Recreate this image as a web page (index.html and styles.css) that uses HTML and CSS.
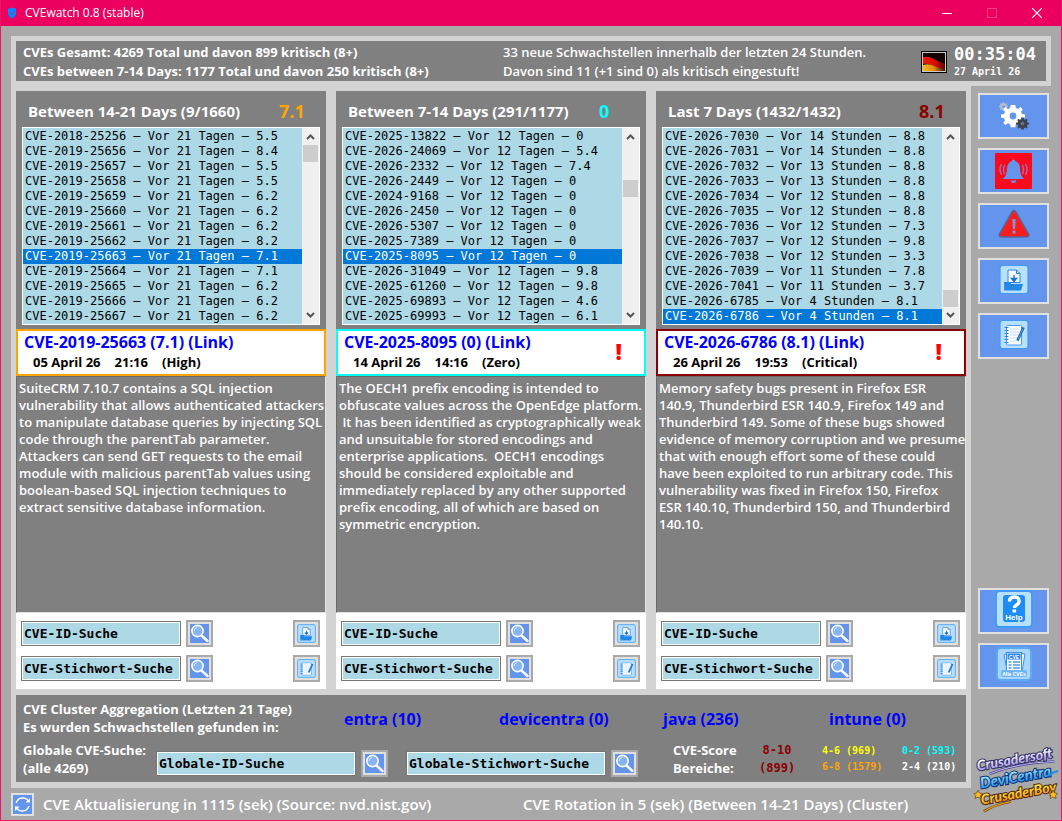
FILE: index.html
```html
<!DOCTYPE html>
<html lang="de">
<head>
    <meta charset="UTF-8">
    <meta name="viewport" content="width=device-width, initial-scale=1.0">
    <title>CVEwatch 0.8 (stable)</title>
    <link rel="stylesheet" href="styles.css">
</head>
<body>
    <!-- shared icons -->
    <svg class="sprite" width="0" height="0" aria-hidden="true">
        <symbol id="search" viewBox="0 0 19 19">
            <path d="M11.5 11.5L17.5 17" stroke="#fff" stroke-width="2.4" stroke-linecap="round"/>
            <circle cx="7.5" cy="7" r="5.6" fill="#86b4f4" stroke="#fff" stroke-width="1.6"/>
            <path d="M4 7a4 4 0 0 1 3-3.5" fill="none" stroke="#d8e8ff" stroke-width="1"/>
        </symbol>
        <symbol id="save" viewBox="0 0 30 30">
            <rect x="1" y="1" width="28" height="28" rx="2.5" fill="#b9dfff" stroke="#3f9bf5" stroke-width="1.2"/>
            <path d="M9 18V5.500h8.500L21 9v9z" fill="#f4faff" stroke="#2a86e0" stroke-width="1"/>
            <path d="M17.500 5.500V9H21" fill="none" stroke="#2a86e0" stroke-width="1"/>
            <path d="M15 10.500v5M12.500 14l2.500 3 2.500-3z" fill="#1c6fd0" stroke="#1c6fd0" stroke-width="1.300"/>
            <path d="M6 17.500h5l1 2h12l-2 6.500H7z" fill="#2387e8"/>
            <path d="M6 17.500V26" stroke="#1c6fd0" stroke-width="1.500"/>
        </symbol>
        <symbol id="note" viewBox="0 0 30 30">
            <rect x="1" y="1" width="28" height="28" rx="2.500" fill="#b9dfff" stroke="#3f9bf5" stroke-width="1.200"/>
            <rect x="7.500" y="6" width="15" height="19.500" rx="1" fill="#fff" stroke="#3f9bf5" stroke-width="1"/>
            <path d="M11 9.500h9M11 12.500h9M11 15.500h9M11 18.500h9M11 21.500h9" stroke="#c5dbef" stroke-width="1"/>
            <path d="M5.500 8h4M5.500 11h4M5.500 14h4M5.500 17h4M5.500 20h4M5.500 23h4" stroke="#2a86e0" stroke-width="1.200"/>
            <path d="M24.500 8L18.500 21" stroke="#1761b0" stroke-width="2.600"/>
            <path d="M24 9L19 20" stroke="#4aa4f7" stroke-width="1"/>
        </symbol>
        <symbol id="gear" viewBox="-12 -12 24 24">
            <path d="M-2.300-11h4.600l.6 3 2.200.9L7.600-8.900 9.700-6.600 8-4.200l1 2.200 3 .6v3l-3 .6-1 2.200 1.700 2.600-2.100 2.100L5.100 7.300l-2.200.9-.6 3h-4.600l-.6-3-2.200-.9-2.500 1.800-2.100-2.100L-8 4.400l-1-2.200-3-.6v-3l3-.6 1-2.200-1.700-2.400 2.100-2.300 2.500 1.800 2.200-.9z"/>
            <circle r="3.400" class="hole"/>
        </symbol>
    </svg>

    <div class="window">
        <div class="titlebar">
            <svg class="shield" width="10" height="12" viewBox="0 0 10 12">
                <path d="M1 1.500Q3.500 1.500 5 .5Q6.500 1.500 9 1.500V6Q9 9.500 5 11.500Q1 9.500 1 6z" fill="#0a84ff"/>
                <path d="M3 5.500L4.500 7L7.500 4" fill="none" stroke="#d11a6a" stroke-width="1"/>
            </svg>
            <span class="caption">CVEwatch 0.8 (stable)</span>
            <button class="winbtn" aria-label="Minimieren"><svg width="10" height="10"><path d="M0 5.500h10" stroke="#fff"/></svg></button>
            <button class="winbtn" aria-label="Maximieren" disabled><svg width="10" height="10"><rect x=".5" y=".5" width="9" height="9" fill="none" stroke="#f2407f"/></svg></button>
            <button class="winbtn" aria-label="Schließen"><svg width="10" height="10"><path d="M0 0L10 10M10 0L0 10" stroke="#fff" stroke-width="1.200"/></svg></button>
        </div>

        <div class="app">
            <header class="summary">
                <div class="stats">
                    CVEs Gesamt: 4269 Total und davon 899 kritisch (8+)<br>
                    CVEs between 7-14 Days: 1177 Total und davon 250 kritisch (8+)
                </div>
                <div class="news">
                    33 neue Schwachstellen innerhalb der letzten 24 Stunden.<br>
                    Davon sind 11 (+1 sind 0) als kritisch eingestuft!
                </div>
                <svg class="flag" width="26" height="22" viewBox="0 0 26 22">
                    <defs>
                        <linearGradient id="red" x1="0" x2="1"><stop offset="0" stop-color="#f01808"/><stop offset=".6" stop-color="#d00c04"/><stop offset="1" stop-color="#5a0604"/></linearGradient>
                        <linearGradient id="yellow" x1="0" x2="1"><stop offset="0" stop-color="#f5b818"/><stop offset=".5" stop-color="#e08a14"/><stop offset="1" stop-color="#3a1404"/></linearGradient>
                    </defs>
                    <rect width="26" height="22" fill="#000"/>
                    <rect x="1.500" y="1.500" width="23" height="19" fill="#120404" stroke="#c9c9c9"/>
                    <path d="M2 6Q8 5 13 8T24 13V18Q17 18 12 15T2 13z" fill="url(#red)"/>
                    <path d="M2 14Q8 12 13 15T24 18V20H2z" fill="url(#yellow)"/>
                </svg>
                <div class="clock">
                    <time class="time">00:35:04</time>
                    <div class="date">27 April 26</div>
                </div>
            </header>

            <main class="board">
                <div class="columns">
                    <section class="column high">
                        <div class="head"><h2>Between 14-21 Days (9/1660)</h2><span class="score">7.1</span></div>
                        <div class="list">
                            <select size="13" aria-label="Between 14-21 Days">
                                <option>CVE-2018-25256 – Vor 21 Tagen – 5.5</option>
                                <option>CVE-2019-25656 – Vor 21 Tagen – 8.4</option>
                                <option>CVE-2019-25657 – Vor 21 Tagen – 5.5</option>
                                <option>CVE-2019-25658 – Vor 21 Tagen – 5.5</option>
                                <option>CVE-2019-25659 – Vor 21 Tagen – 6.2</option>
                                <option>CVE-2019-25660 – Vor 21 Tagen – 6.2</option>
                                <option>CVE-2019-25661 – Vor 21 Tagen – 6.2</option>
                                <option>CVE-2019-25662 – Vor 21 Tagen – 8.2</option>
                                <option selected>CVE-2019-25663 – Vor 21 Tagen – 7.1</option>
                                <option>CVE-2019-25664 – Vor 21 Tagen – 7.1</option>
                                <option>CVE-2019-25665 – Vor 21 Tagen – 6.2</option>
                                <option>CVE-2019-25666 – Vor 21 Tagen – 6.2</option>
                                <option>CVE-2019-25667 – Vor 21 Tagen – 6.2</option>
                            </select>
                            <div class="scroll top">
                                <svg width="9" height="6"><path d="M1 5L4.500 1.500L8 5" /></svg>
                                <i class="before"></i><i class="thumb"></i><i class="after"></i>
                                <svg width="9" height="6"><path d="M1 1L4.500 4.500L8 1" /></svg>
                            </div>
                        </div>
                        <div class="info">
                            <a href="#">CVE-2019-25663 (7.1) (Link)</a>
                            <div class="meta"><span>05 April 26</span><span>21:16</span><span>(High)</span></div>
                        </div>
                        <div class="text">SuiteCRM 7.10.7 contains a SQL injection
vulnerability that allows authenticated attackers
to manipulate database queries by injecting SQL
code through the parentTab parameter.
Attackers can send GET requests to the email
module with malicious parentTab values using
boolean-based SQL injection techniques to
extract sensitive database information.</div>
                        <div class="tools">
                            <input type="text" value="CVE-ID-Suche" aria-label="CVE-ID-Suche">
                            <button class="small" aria-label="Suchen"><svg><use href="#search"/></svg></button>
                            <button class="small right" aria-label="Speichern"><svg><use href="#save"/></svg></button>
                            <input type="text" value="CVE-Stichwort-Suche" aria-label="CVE-Stichwort-Suche">
                            <button class="small" aria-label="Suchen"><svg><use href="#search"/></svg></button>
                            <button class="small right" aria-label="Notiz"><svg><use href="#note"/></svg></button>
                        </div>
                    </section>

                    <section class="column zero">
                        <div class="head"><h2>Between 7-14 Days (291/1177)</h2><span class="score">0</span></div>
                        <div class="list">
                            <select size="13" aria-label="Between 7-14 Days">
                                <option>CVE-2025-13822 – Vor 12 Tagen – 0</option>
                                <option>CVE-2026-24069 – Vor 12 Tagen – 5.4</option>
                                <option>CVE-2026-2332 – Vor 12 Tagen – 7.4</option>
                                <option>CVE-2026-2449 – Vor 12 Tagen – 0</option>
                                <option>CVE-2024-9168 – Vor 12 Tagen – 0</option>
                                <option>CVE-2026-2450 – Vor 12 Tagen – 0</option>
                                <option>CVE-2026-5307 – Vor 12 Tagen – 0</option>
                                <option>CVE-2025-7389 – Vor 12 Tagen – 0</option>
                                <option selected>CVE-2025-8095 – Vor 12 Tagen – 0</option>
                                <option>CVE-2026-31049 – Vor 12 Tagen – 9.8</option>
                                <option>CVE-2025-61260 – Vor 12 Tagen – 9.8</option>
                                <option>CVE-2025-69893 – Vor 12 Tagen – 4.6</option>
                                <option>CVE-2025-69993 – Vor 12 Tagen – 6.1</option>
                            </select>
                            <div class="scroll middle">
                                <svg width="9" height="6"><path d="M1 5L4.500 1.500L8 5" /></svg>
                                <i class="before"></i><i class="thumb"></i><i class="after"></i>
                                <svg width="9" height="6"><path d="M1 1L4.500 4.500L8 1" /></svg>
                            </div>
                        </div>
                        <div class="info">
                            <a href="#">CVE-2025-8095 (0) (Link)</a>
                            <div class="meta"><span>14 April 26</span><span>14:16</span><span>(Zero)</span></div>
                            <b class="alert">!</b>
                        </div>
                        <div class="text">The OECH1 prefix encoding is intended to
obfuscate values across the OpenEdge platform.
 It has been identified as cryptographically weak
and unsuitable for stored encodings and
enterprise applications.  OECH1 encodings
should be considered exploitable and
immediately replaced by any other supported
prefix encoding, all of which are based on
symmetric encryption.</div>
                        <div class="tools">
                            <input type="text" value="CVE-ID-Suche" aria-label="CVE-ID-Suche">
                            <button class="small" aria-label="Suchen"><svg><use href="#search"/></svg></button>
                            <button class="small right" aria-label="Speichern"><svg><use href="#save"/></svg></button>
                            <input type="text" value="CVE-Stichwort-Suche" aria-label="CVE-Stichwort-Suche">
                            <button class="small" aria-label="Suchen"><svg><use href="#search"/></svg></button>
                            <button class="small right" aria-label="Notiz"><svg><use href="#note"/></svg></button>
                        </div>
                    </section>

                    <section class="column critical">
                        <div class="head"><h2>Last 7 Days (1432/1432)</h2><span class="score">8.1</span></div>
                        <div class="list">
                            <select size="13" aria-label="Last 7 Days">
                                <option>CVE-2026-7030 – Vor 14 Stunden – 8.8</option>
                                <option>CVE-2026-7031 – Vor 14 Stunden – 8.8</option>
                                <option>CVE-2026-7032 – Vor 13 Stunden – 8.8</option>
                                <option>CVE-2026-7033 – Vor 13 Stunden – 8.8</option>
                                <option>CVE-2026-7034 – Vor 12 Stunden – 8.8</option>
                                <option>CVE-2026-7035 – Vor 12 Stunden – 8.8</option>
                                <option>CVE-2026-7036 – Vor 12 Stunden – 7.3</option>
                                <option>CVE-2026-7037 – Vor 12 Stunden – 9.8</option>
                                <option>CVE-2026-7038 – Vor 12 Stunden – 3.3</option>
                                <option>CVE-2026-7039 – Vor 11 Stunden – 7.8</option>
                                <option>CVE-2026-7041 – Vor 11 Stunden – 3.7</option>
                                <option>CVE-2026-6785 – Vor 4 Stunden – 8.1</option>
                                <option selected>CVE-2026-6786 – Vor 4 Stunden – 8.1</option>
                            </select>
                            <div class="scroll bottom">
                                <svg width="9" height="6"><path d="M1 5L4.500 1.500L8 5" /></svg>
                                <i class="before"></i><i class="thumb"></i><i class="after"></i>
                                <svg width="9" height="6"><path d="M1 1L4.500 4.500L8 1" /></svg>
                            </div>
                        </div>
                        <div class="info">
                            <a href="#">CVE-2026-6786 (8.1) (Link)</a>
                            <div class="meta"><span>26 April 26</span><span>19:53</span><span>(Critical)</span></div>
                            <b class="alert">!</b>
                        </div>
                        <div class="text">Memory safety bugs present in Firefox ESR
140.9, Thunderbird ESR 140.9, Firefox 149 and
Thunderbird 149. Some of these bugs showed
evidence of memory corruption and we presume
that with enough effort some of these could
have been exploited to run arbitrary code. This
vulnerability was fixed in Firefox 150, Firefox
ESR 140.10, Thunderbird 150, and Thunderbird
140.10.</div>
                        <div class="tools">
                            <input type="text" value="CVE-ID-Suche" aria-label="CVE-ID-Suche">
                            <button class="small" aria-label="Suchen"><svg><use href="#search"/></svg></button>
                            <button class="small right" aria-label="Speichern"><svg><use href="#save"/></svg></button>
                            <input type="text" value="CVE-Stichwort-Suche" aria-label="CVE-Stichwort-Suche">
                            <button class="small" aria-label="Suchen"><svg><use href="#search"/></svg></button>
                            <button class="small right" aria-label="Notiz"><svg><use href="#note"/></svg></button>
                        </div>
                    </section>
                </div>

                <section class="cluster">
                    <div class="row">
                        <div class="intro">CVE Cluster Aggregation (Letzten 21 Tage)<br>Es wurden Schwachstellen gefunden in:</div>
                        <nav class="hits">
                            <a href="#">entra (10)</a>
                            <a href="#">devicentra (0)</a>
                            <a href="#">java (236)</a>
                            <a href="#">intune (0)</a>
                        </nav>
                    </div>
                    <div class="row">
                        <div class="global">Globale CVE-Suche:<br>(alle 4269)</div>
                        <div class="find">
                            <input type="text" value="Globale-ID-Suche" aria-label="Globale-ID-Suche">
                            <button class="small" aria-label="Suchen"><svg><use href="#search"/></svg></button>
                        </div>
                        <div class="find">
                            <input type="text" value="Globale-Stichwort-Suche" aria-label="Globale-Stichwort-Suche">
                            <button class="small" aria-label="Suchen"><svg><use href="#search"/></svg></button>
                        </div>
                        <div class="ranges">
                            <div class="label">CVE-Score<br>Bereiche:</div>
                            <div class="top-range">8-10<br>(899)</div>
                            <div class="range"><span class="yellow">4-6 (969)</span><br><span class="orange">6-8 (1579)</span></div>
                            <div class="range"><span class="cyan">0-2 (593)</span><br><span>2-4 (210)</span></div>
                        </div>
                    </div>
                </section>
            </main>

            <aside class="sidebar">
                <button class="big" aria-label="Einstellungen">
                    <svg width="30" height="28" viewBox="0 0 30 28">
                        <g fill="#b9c0cc" color="#6495ed"><use href="#gear" x="0" y="0" width="9" height="9"/></g>
                        <g fill="#fff" color="#6495ed"><use href="#gear" x="2" y="2" width="24" height="24"/></g>
                        <g fill="#3e444e" color="#6a7486"><use href="#gear" x="17" y="15" width="13" height="13"/></g>
                    </svg>
                </button>
                <button class="big" aria-label="Alarm">
                    <svg width="38" height="36" viewBox="0 0 38 36">
                        <rect width="37" height="36" rx="1" fill="#fb0a1e"/>
                        <path d="M18.500 6.500a1.800 1.800 0 0 1 1.800 1.800Q25 10 25 16Q25 22 29 26H8Q12 22 12 16Q12 10 16.700 8.300A1.800 1.800 0 0 1 18.500 6.500zM15.500 27.500h6q-.5 2.500-3 2.500t-3-2.500z" fill="#6495ed"/>
                        <path d="M9.500 12q-2 4.500 0 9M6.500 11q-3 5.500 0 11M27.500 12q2 4.500 0 9M30.500 11q3 5.500 0 11" fill="none" stroke="#a06fb4" stroke-width="1.400"/>
                    </svg>
                </button>
                <button class="big" aria-label="Warnungen">
                    <svg class="raised" width="32" height="30" viewBox="0 0 32 30">
                        <path d="M14 3Q16 0 18 3L30.500 25Q31.500 28 28.500 28H3.500Q.500 28 1.500 25z" fill="#f91d1d" stroke="#55679a" stroke-width="1.500"/>
                        <path d="M14.300 10h3.400l-.7 10h-2zM14.500 21.500h3v3h-3z" fill="#7e93d8"/>
                    </svg>
                </button>
                <button class="big" aria-label="Speichern"><svg class="raised" width="30" height="31"><use href="#save"/></svg></button>
                <button class="big" aria-label="Notizen"><svg class="raised" width="30" height="31"><use href="#note"/></svg></button>
                <button class="big help" aria-label="Hilfe">
                    <svg class="raised" width="38" height="38" viewBox="0 0 38 38">
                        <rect x="1" y="1" width="36" height="36" rx="4" fill="#b9e0ff" stroke="#3f9bfa" stroke-width="1.800"/>
                        <rect x="8" y="5" width="22" height="27" rx="3" fill="#1e8cf5"/>
                        <path d="M14.500 11.500q0-4.500 4.800-4.500t4.700 4.200q0 2.400-2.500 3.800q-2 1-2 3" fill="none" stroke="#fff" stroke-width="3.400"/>
                        <rect x="17.500" y="19.500" width="3.600" height="3" fill="#fff"/>
                        <text x="19" y="30" font-size="8" text-anchor="middle">Help</text>
                    </svg>
                </button>
                <button class="big" aria-label="Alle CVEs">
                    <svg class="raised" width="36" height="34" viewBox="0 0 36 34">
                        <rect x="1" y="1" width="34" height="32" rx="4" fill="#a9d6fd" stroke="#5aaafa" stroke-width="1.800"/>
                        <path d="M24 6l5 1-3 18h-3zM12 6l-4 2 3 15z" fill="#e8f5ff" stroke="#3d8fe6"/>
                        <rect x="10.500" y="5.500" width="15" height="18" fill="#fff" stroke="#3d8fe6"/>
                        <rect x="11.500" y="6.500" width="13" height="6" fill="#2b84e4"/>
                        <path d="M12.500 15h3M17 15h7M12.500 18h3M17 18h7M12.500 21h3M17 21h7" stroke="#4d9cf0" stroke-width="1.300"/>
                        <rect x="5" y="23" width="26" height="7" rx="2" fill="#6fb5fa"/>
                        <text x="18" y="11.500" font-size="5" text-anchor="middle">CVE</text>
                        <text x="18" y="28.500" font-size="5" text-anchor="middle">Alle CVEs</text>
                    </svg>
                </button>
                <svg class="logo" width="82" height="64" viewBox="0 0 82 64">
                    <defs>
                        <linearGradient id="violet" x1="0" y1="0" x2="0" y2="1"><stop offset=".3" stop-color="#fff"/><stop offset="1" stop-color="#8f7fe0"/></linearGradient>
                        <linearGradient id="blue" x1="0" y1="0" x2="0" y2="1"><stop offset=".3" stop-color="#8fe4ff"/><stop offset="1" stop-color="#0a78e0"/></linearGradient>
                        <linearGradient id="gold" x1="0" y1="0" x2="0" y2="1"><stop offset=".3" stop-color="#ffe23a"/><stop offset="1" stop-color="#f08a10"/></linearGradient>
                    </defs>
                    <g transform="rotate(-10 41 32)">
                        <path d="M14 21Q45 15 80 20" fill="none" stroke="#4a4290" stroke-width="2.500"/>
                        <path d="M14 21Q45 15 80 20" fill="none" stroke="#c8c0f4" stroke-width="1"/>
                        <text x="3" y="16" font-size="14" fill="url(#violet)" stroke="#2c2860">Crusadersoft</text>
                        <text x="3" y="34" font-size="15" fill="url(#blue)" stroke="#0a2c70">DeviCentra</text>
                        <path d="M72 33Q77 30 82 30" fill="none" stroke="#1a8be8" stroke-width="2"/>
                        <text x="1" y="50" font-size="14" fill="url(#gold)" stroke="#4a2208">CrusaderBoy</text>
                        <path d="M2 57Q14 52 30 52" fill="none" stroke="#5a2c08" stroke-width="2.500"/>
                        <path d="M2 57Q14 52 30 52" fill="none" stroke="#f0a010" stroke-width="1.200"/>
                    </g>
                    <path d="M1 42l1.500 3 3 .5-2 2 .5 3-3-1.500L-2 50.500l.8-3-2-2 3-.5zM76 42l1.500 3 3 .5-2 2 .5 3-3-1.500-3 1.500.8-3-2-2 3-.5z" fill="#ffc020" stroke="#5a2c08" stroke-width=".600"/>
                </svg>
            </aside>

            <footer class="status">
                <button class="refresh" aria-label="Aktualisieren">
                    <svg width="19" height="19" viewBox="0 0 19 19">
                        <path d="M3 8Q5 3 9.500 3T15.500 6.500M16 11Q14 16 9.500 16T3.500 12.500" fill="none" stroke="#fff" stroke-width="1.300"/>
                        <path d="M12.500 7.500h4.500V3zM6.500 11.500H2V16z" fill="#fff"/>
                    </svg>
                </button>
                <span class="update">CVE Aktualisierung in 1115 (sek) (Source: nvd.nist.gov)</span>
                <span>CVE Rotation in 5 (sek) (Between 14-21 Days) (Cluster)</span>
            </footer>
        </div>
    </div>
</body>
</html>
```
FILE: styles.css
```css
* {
    box-sizing: border-box;
}

body {
    margin: 0;
    font-family: "Open Sans", "Noto Sans", sans-serif;
    font-size: 13px;
    font-weight: 700;
    line-height: 18px;
    color: #fff;
    background-color: #a9a9a9;
}

button {
    display: flex;
    align-items: center;
    justify-content: center;
    padding: 0;
    border: none;
    cursor: pointer;
}

a {
    color: blue;
    text-decoration: none;
}

.sprite {
    position: absolute;
}

.hole {
    fill: currentColor;
}

.window {
    display: flex;
    flex-direction: column;
    min-height: 100vh;
    border: 1px solid #ee1466;
    border-top: none;
}

/* title bar */
.titlebar {
    display: flex;
    align-items: center;
    height: 26px;
    padding: 0 2px 0 6px;
    background-color: #ec005f;
    font-weight: 400;
    font-size: 12px;
}

.caption {
    flex: 1;
    margin-left: 8px;
}

.winbtn {
    width: 45px;
    height: 26px;
    background: none;
}

.app {
    flex: 1;
    display: grid;
    grid-template-columns: 1fr 80px;
    grid-template-rows: auto 1fr auto;
    padding: 10px 10px 0;
    background-color: #a9a9a9;
}

/* top summary */
.summary {
    grid-column: 1 / 3;
    display: flex;
    align-items: center;
    height: 50px;
    padding: 1px 7px 0;
    border: 5px solid lightgray;
    background-color: gray;
    line-height: 19px;
    white-space: nowrap;
}

.stats {
    width: 480px;
}

.news {
    flex: 1;
    font-weight: 600;
}

.clock {
    width: 85px;
    margin-left: 7px;
    font-family: "DejaVu Sans Mono", monospace;
}

.time {
    display: block;
    font-size: 17px;
    line-height: 20px;
}

.date {
    font-size: 10px;
    line-height: 16px;
}

/* boards */
.board {
    display: flex;
    flex-direction: column;
    gap: 6px;
    padding: 5px 5px 6px;
    background-color: lightgray;
}

.columns {
    flex: 1;
    display: grid;
    grid-template-columns: repeat(3, 1fr);
    gap: 10px;
}

.column {
    display: flex;
    flex-direction: column;
    min-width: 0;
    background-color: gray;
}

.high {
    --level: orange;
}

.zero {
    --level: cyan;
}

.critical {
    --level: darkred;
}

.head {
    display: flex;
    align-items: center;
    justify-content: space-between;
    height: 36px;
    padding: 4px 20px 0 12px;
}

h2 {
    margin: 0;
    font-size: 15px;
}

.score {
    width: 27px;
    font-size: 18px;
    color: var(--level);
}

.list {
    display: flex;
    height: 198px;
    margin: 0 6px 4px;
    border: 1px solid #fff;
    background-color: lightblue;
}

select {
    flex: 1;
    min-width: 0;
    height: 196px;
    padding: 1px 0 0;
    border: none;
    border-radius: 0;
    outline: none;
    overflow: hidden;
    background-color: lightblue;
    color: #000;
    font-family: "DejaVu Sans Mono", monospace;
    font-size: 12px;
    font-weight: 400;
}

option {
    height: 15px;
    min-height: 15px;
    padding: 0 2px;
    line-height: 15px;
    color: #000;
}

option:checked {
    background: #0078d7 linear-gradient(#0078d7, #0078d7);
    color: #fff;
}

.scroll {
    display: flex;
    flex-direction: column;
    align-items: center;
    width: 17px;
    padding: 6px 0;
    background-color: #f0f0f0;
}

.scroll path {
    fill: none;
    stroke: #555;
    stroke-width: 2;
}

.scroll .thumb {
    width: 15px;
    height: 17px;
    background-color: #cdcdcd;
}

.scroll .before {
    flex: 0 0 5px;
}

.scroll .after {
    flex: 1;
}

.middle .before {
    flex-basis: 40px;
}

.bottom .before {
    flex: 1;
}

.bottom .after {
    flex: 0 0 5px;
}

.info {
    position: relative;
    height: 47px;
    padding: 1px 6px;
    border: 2px solid var(--level);
    background-color: #fff;
    color: #000;
}

.info a {
    display: block;
    font-size: 16px;
    line-height: 20px;
}

.meta {
    display: flex;
    gap: 14px;
    padding-left: 9px;
    line-height: 20px;
}

.alert {
    position: absolute;
    top: 8px;
    right: 22px;
    font-size: 22px;
    line-height: 24px;
    color: red;
}

.text {
    flex: 1;
    min-height: 120px;
    padding: 3px 0 3px 2px;
    border: 1px solid #696969;
    border-right-color: #e3e3e3;
    border-bottom-color: #e3e3e3;
    font-weight: 600;
    line-height: 17px;
    white-space: pre;
}

.tools {
    display: grid;
    grid-template-columns: 160px 27px 1fr;
    gap: 8px 5px;
    align-items: center;
    padding: 7px 6px 7px 5px;
    background-color: #fff;
}

input {
    width: 100%;
    min-width: 0;
    height: 25px;
    padding: 0 2px;
    border: 1px solid #777;
    border-radius: 0;
    outline: 1px solid #fff;
    outline-offset: -2px;
    background-color: lightblue;
    color: #000;
    font-family: "DejaVu Sans Mono", monospace;
    font-size: 13px;
    font-weight: 700;
}

.small {
    width: 27px;
    height: 27px;
    border: 2px solid #a9a9a9;
    background-color: #e0e0e0;
}

.small svg {
    width: 19px;
    height: 19px;
    background-color: #6495ed;
}

.right {
    justify-self: end;
}

.right svg {
    background-color: #b9dfff;
}

/* cluster panel */
.cluster {
    padding: 5px 7px;
    background-color: gray;
}

.row {
    display: flex;
    align-items: center;
    white-space: nowrap;
}

.row + .row {
    margin-top: 5px;
}

.intro {
    width: 321px;
}

.hits {
    flex: 1;
    display: grid;
    grid-template-columns: 155fr 164fr 166fr 130fr;
    padding-top: 2px;
    font-size: 16px;
}

.global {
    width: 133px;
}

.find {
    display: flex;
    align-items: center;
    gap: 6px;
    width: 250px;
    padding-top: 8px;
}

.find input {
    width: 200px;
}

.find .small {
    margin-left: -1px;
}

.ranges {
    flex: 1;
    display: grid;
    grid-template-columns: 86px 63px 80px 1fr;
    padding-left: 17px;
}

.top-range {
    color: darkred;
    font-family: "DejaVu Sans Mono", monospace;
    font-size: 12px;
    text-align: center;
    justify-self: start;
}

.range {
    padding-top: 2px;
    font-family: "DejaVu Sans Mono", monospace;
    font-size: 10px;
    line-height: 16px;
}

.yellow {
    color: yellow;
}

.orange {
    color: orange;
}

.cyan {
    color: cyan;
}

/* sidebar */
.sidebar {
    grid-row: 2 / 4;
    grid-column: 2;
    display: flex;
    flex-direction: column;
    gap: 9px;
    padding: 7px 0 8px 7px;
}

.big {
    width: 71px;
    height: 46px;
    flex: none;
    border: 2px solid #e0e0e0;
    background-color: #6495ed;
}

.big text {
    fill: #fff;
    font-weight: 800;
}

.raised {
    margin-bottom: 4px;
}

.help {
    margin-top: auto;
}

.logo {
    flex: none;
    margin: 50px 0 0 -1px;
    overflow: visible;
}

.logo text {
    font-family: Lato, sans-serif;
    font-weight: 900;
    font-style: italic;
    stroke-width: 2;
    paint-order: stroke;
}

/* status line */
.status {
    display: flex;
    align-items: center;
    height: 32px;
    font-size: 15px;
    font-weight: 600;
    line-height: 16px;
    white-space: nowrap;
}

.refresh {
    width: 23px;
    height: 23px;
    border: 2px solid #e0e0e0;
    background-color: #6495ed;
}

.update {
    width: 480px;
    margin-left: 9px;
}
```
